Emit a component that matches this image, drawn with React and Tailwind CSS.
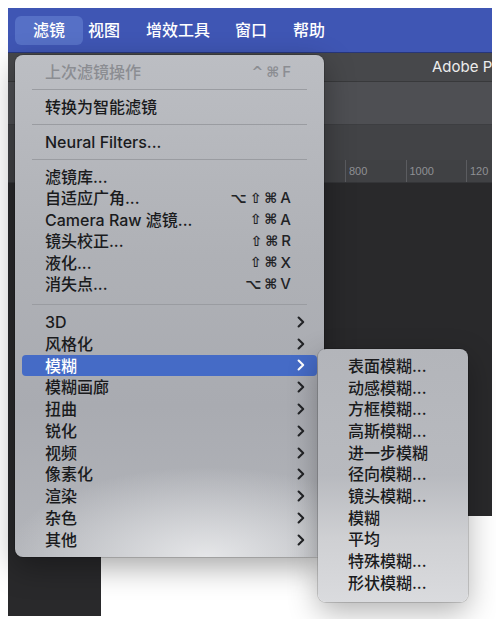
import React from 'react';

const menuBarItems = [
  { label: '滤镜', cls: 'ml-0 px-[18px] bg-[#5670c6] rounded-[6px]' },
  { label: '视图', cls: 'ml-[5px]' },
  { label: '增效工具', cls: 'ml-[26px]' },
  { label: '窗口', cls: 'ml-[25px]' },
  { label: '帮助', cls: 'ml-[26px]' },
];

const toolFilters = [
  { label: '滤镜库...' },
  { label: '自适应广角...', keys: ['⌥', '⇧', '⌘', 'A'] },
  { label: 'Camera Raw 滤镜...', keys: ['⇧', '⌘', 'A'] },
  { label: '镜头校正...', keys: ['⇧', '⌘', 'R'] },
  { label: '液化...', keys: ['⇧', '⌘', 'X'] },
  { label: '消失点...', keys: ['⌥', '⌘', 'V'] },
];

const subMenus = ['3D', '风格化', '模糊', '模糊画廊', '扭曲', '锐化', '视频', '像素化', '渲染', '杂色', '其他'];

const blurItems = [
  '表面模糊...', '动感模糊...', '方框模糊...', '高斯模糊...', '进一步模糊',
  '径向模糊...', '镜头模糊...', '模糊', '平均', '特殊模糊...', '形状模糊...',
];

const Chevron = ({ white }) => (
  <svg width="8" height="12" viewBox="0 0 8 12" className={white ? 'text-white' : 'text-[#222326]'}>
    <path d="M1.6 1.6 L6.2 6 L1.6 10.4" fill="none" stroke="currentColor" strokeWidth="2.1" strokeLinecap="round" strokeLinejoin="round" />
  </svg>
);

const Shortcut = ({ keys, disabled }) => (
  <div className={`flex items-center gap-[3px] text-[15px] ${disabled ? 'text-[#8b8d92]' : 'text-[#222326]'}`}>
    {keys.map((k, i) => (
      <span key={i} className={/[A-Z]/.test(k) ? "font-['Inter',sans-serif]" : "font-['DejaVu_Sans',sans-serif] font-bold text-[14px]"}>
        {k}
      </span>
    ))}
  </div>
);

const Row = ({ label, keys, chevron, active, disabled, h = 'h-[22px]' }) => (
  <div
    className={`${h} mx-[7px] pl-[23px] ${keys ? 'pr-[26px]' : 'pr-[12px]'} flex items-center justify-between rounded-[4px] ${
      active ? 'bg-[#456bc6] text-white' : disabled ? 'text-[#8b8d92]' : 'text-[#1a1b1d]'
    }`}
  >
    <span>{label}</span>
    {keys && <Shortcut keys={keys} disabled={disabled} />}
    {chevron && <Chevron white={active} />}
  </div>
);

const Sep = ({ h = 'h-[13px]' }) => (
  <div className={`${h} flex items-center mx-[17px]`}>
    <div className="h-px w-full bg-[#9a9ca1]" />
  </div>
);

export default function App() {
  return (
    <div className="relative w-[496px] h-[619px] bg-white overflow-hidden pt-[8px] pl-[8px] pr-[4px] pb-[3px] font-['Inter','Noto_Sans_CJK_SC',sans-serif]">
      <div className="flex flex-col h-full">
        {/* mac menu bar */}
        <div className="h-[45px] shrink-0 bg-[#3f56b4] border-b border-[#27367a] flex items-center pl-[7px] text-white text-[16px] font-medium">
          {menuBarItems.map((item) => (
            <div key={item.label} className={`h-[29px] flex items-center ${item.cls}`}>
              {item.label}
            </div>
          ))}
        </div>

        {/* photoshop chrome */}
        <div className="h-[29px] shrink-0 bg-[#47484b] border-b border-[#38393b] flex items-center pl-[424px] overflow-hidden whitespace-nowrap text-[15px] text-[#ececec]">
          Adobe P
        </div>
        <div className="h-[43px] shrink-0 bg-[#4e4f53] border-b border-[#3d3e41]" />
        <div className="h-[35px] shrink-0 bg-[#424346]" />
        <div className="h-[23px] shrink-0 bg-[#404144] border-b border-[#343538] flex pl-[337px] overflow-hidden whitespace-nowrap">
          {['800', '1000', '120'].map((n) => (
            <div key={n} className="w-[60.5px] shrink-0 border-l border-[#5b5c60] pl-[3px] flex items-center text-[11px] text-[#8f9094] font-['Liberation_Sans',sans-serif]">
              {n}
            </div>
          ))}
        </div>

        <div className="flex-1 flex">
          <div className="w-[93px] bg-[#29292b]" />
          <div className="flex-1 flex flex-col">
            <div className="h-[333px] bg-[#29292b]" />
            <div className="flex-1 bg-white" />
          </div>
        </div>
      </div>

      {/* filter menu */}
      <div className="absolute left-[15px] top-[55px] w-[309px] h-[502px] pt-[6px] rounded-[8px] text-[16px] font-medium shadow-[0_10px_30px_rgba(0,0,0,0.35)] ring-1 ring-black/15 bg-[radial-gradient(ellipse_200px_90px_at_62%_100%,rgba(232,233,235,0.95),rgba(232,233,235,0)),linear-gradient(180deg,#bcbec3_0%,#afb1b6_40%,#a9abb1_70%,#b3b5ba_100%)]">
        <Row label="上次滤镜操作" keys={['^', '⌘', 'F']} disabled />
        <Sep />
        <Row label="转换为智能滤镜" />
        <Sep />
        <Row label="Neural Filters..." />
        <Sep />
        {toolFilters.map((f) => (
          <Row key={f.label} label={f.label} keys={f.keys} h="h-[21.5px]" />
        ))}
        <div className="h-[16px] flex items-start pt-[9px] mx-[17px]">
          <div className="h-px w-full bg-[#9a9ca1]" />
        </div>
        {subMenus.map((s) => (
          <Row key={s} label={s} chevron active={s === '模糊'} h="h-[21.8px]" />
        ))}
      </div>

      {/* blur submenu */}
      <div className="absolute left-[318px] top-[349px] w-[150px] h-[253px] pt-[6px] rounded-[8px] text-[16px] font-medium text-[#1a1b1d] shadow-[0_10px_30px_rgba(0,0,0,0.3)] ring-1 ring-black/15 bg-[linear-gradient(180deg,#b3b5ba_0%,#b8babf_50%,#cfd0d3_75%,#dadbde_100%)]">
        {blurItems.map((b) => (
          <div key={b} className="h-[21.7px] pl-[30px] flex items-center">
            {b}
          </div>
        ))}
      </div>
    </div>
  );
}
